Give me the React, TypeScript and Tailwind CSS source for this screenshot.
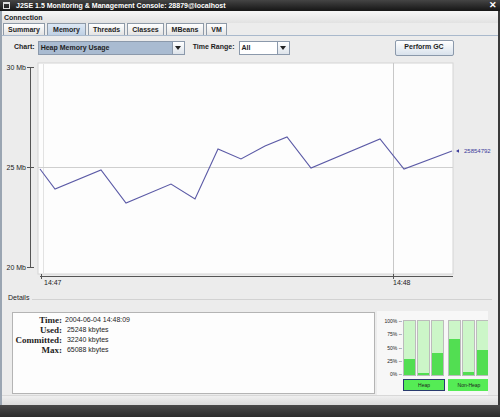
import React from "react";

const points: [number, number][] = [
  [40, 169], [55, 189], [101, 170], [126, 203], [171, 184], [195, 199], [218, 149],
  [241, 159], [265, 146], [287, 137], [311, 168], [380, 139], [404, 169], [452, 151],
];

const tabs = [
  { name: "Summary", w: "w-[42px]" },
  { name: "Memory", w: "w-[39px]" },
  { name: "Threads", w: "w-[37px]" },
  { name: "Classes", w: "w-[37px]" },
  { name: "MBeans", w: "w-[38px]" },
  { name: "VM", w: "w-[21px]" },
];

const bars = [
  [29, 4, 40],
  [67, 5, 47],
];

function Arrow() {
  return (
    <div className="w-[12px] h-full flex items-center justify-center bg-gradient-to-b from-white to-[#dde3ea] border-l border-[#8b99ab]">
      <svg width="6" height="4" viewBox="0 0 6 4">
        <path d="M0 0h6L3 4z" fill="#222" />
      </svg>
    </div>
  );
}

function Chart() {
  const d = points.map((p, i) => `${i ? "L" : "M"}${p[0]} ${p[1]}`).join(" ");
  return (
    <svg width="496" height="233" viewBox="2 58 496 233" className="block">
      <rect x="38" y="63" width="415" height="211" fill="#fdfdfd" stroke="#d4d4d4" />
      <line x1="43.5" y1="64" x2="43.5" y2="273" stroke="#e2e2e2" />
      <line x1="38" y1="167.5" x2="453" y2="167.5" stroke="#cfcfcf" />
      <line x1="393.5" y1="63" x2="393.5" y2="276" stroke="#c8c8c8" />
      <path d={d} fill="none" stroke="#5b5aa6" strokeWidth="1.1" />
      {/* y axis */}
      <line x1="30.5" y1="67" x2="30.5" y2="268" stroke="#555" />
      {[67, 167, 267].map((y) => (
        <line key={y} x1="27" y1={y + 0.5} x2="34" y2={y + 0.5} stroke="#555" />
      ))}
      {[["30 Mb", 67], ["25 Mb", 167], ["20 Mb", 267]].map(([t, y]) => (
        <text key={t as string} x="26" y={(y as number) + 2.5} textAnchor="end" fontSize="7" fill="#222" fontFamily="Liberation Sans, Arial, sans-serif">
          {t}
        </text>
      ))}
      {/* x axis */}
      <line x1="40" y1="276.5" x2="453" y2="276.5" stroke="#555" />
      <line x1="41.5" y1="274" x2="41.5" y2="279" stroke="#555" />
      <line x1="393.5" y1="274" x2="393.5" y2="279" stroke="#555" />
      <text x="44" y="285" fontSize="7" fill="#222" fontFamily="Liberation Sans, Arial, sans-serif">14:47</text>
      <text x="393" y="285" fontSize="7" fill="#222" fontFamily="Liberation Sans, Arial, sans-serif">14:48</text>
      {/* current value */}
      <path d="M456 151 l3 -1.8 v3.6z" fill="#3b3a9a" />
      <text x="464" y="153" fontSize="6" fill="#3b3a9a" fontFamily="Liberation Sans, Arial, sans-serif">25854792</text>
    </svg>
  );
}

export default function App() {
  return (
    <div className="w-[500px] h-[417px] overflow-hidden flex flex-col bg-[#ececec] font-['Liberation_Sans',Arial,sans-serif] text-[#1e1e1e]">
      {/* title bar */}
      <div className="h-[11px] shrink-0 flex items-center bg-gradient-to-b from-[#454545] to-[#161616] text-white pl-[3px] pr-[3px]">
        <div className="w-[7px] h-[7px] border border-[#ddd] border-t-2" />
        <span className="ml-[6px] text-[7px] font-bold leading-none">
          J2SE 1.5 Monitoring &amp; Management Console: 28879@localhost
        </span>
        <span className="ml-auto text-[9px] font-bold leading-none">✕</span>
      </div>

      <div className="flex-1 flex flex-col border-l-2 border-r-2 border-l-[#9aa5b2] border-r-[#3a3a3a]">
        {/* menu bar */}
        <div className="h-[12px] shrink-0 flex items-center px-[2px] bg-gradient-to-b from-[#f6f6f6] to-[#e2e2e2]">
          <span className="text-[7px] font-bold leading-none">Connection</span>
        </div>

        {/* tabs */}
        <div className="h-[13px] shrink-0 flex items-end gap-[2px] pl-[1px] bg-[#ececec] border-b border-[#a9b9cc]">
          {tabs.map((t) => (
            <div
              key={t.name}
              className={`${t.w} h-[12px] flex items-center justify-center text-[7px] font-bold leading-none border border-b-0 border-[#8e9aa8] ${
                t.name === "Memory" ? "bg-gradient-to-b from-[#dde8f4] to-[#bfd0e4]" : "bg-gradient-to-b from-white to-[#e3e3e3]"
              }`}
            >
              {t.name}
            </div>
          ))}
        </div>

        {/* panel */}
        <div className="flex-1 flex flex-col bg-[#ececec]">
          {/* controls */}
          <div className="h-[22px] shrink-0 flex items-center pl-[12px] pt-[1px]">
            <span className="text-[7px] font-bold">Chart:</span>
            <div className="ml-[3px] w-[147px] h-[14px] flex border border-[#8b99ab] bg-[#a9bbd1]">
              <span className="flex-1 text-[7px] font-bold leading-[12px] pl-[2px]">Heap Memory Usage</span>
              <Arrow />
            </div>
            <span className="ml-[8px] text-[7px] font-bold">Time Range:</span>
            <div className="ml-[4px] w-[51px] h-[14px] flex border border-[#8b99ab] bg-white">
              <span className="flex-1 text-[7px] font-bold leading-[12px] pl-[2px]">All</span>
              <Arrow />
            </div>
            <div className="ml-[105px] w-[59px] h-[16px] flex items-center justify-center border border-[#8b99ab] rounded-[2px] bg-gradient-to-b from-white to-[#d9e2ec] text-[7px] font-bold">
              Perform GC
            </div>
          </div>

          <Chart />

          {/* details */}
          <div className="h-[104px] shrink-0 flex flex-col">
            <div className="h-[14px] flex items-center pl-[6px] pr-[6px] gap-[3px]">
              <span className="text-[7px]">Details</span>
              <div className="flex-1 h-px bg-[#d2d2d2] mt-[2px]" />
            </div>
            <div className="flex pl-[10px] pt-[6px]">
              <div className="w-[363px] h-[82px] mt-[1px] bg-[#fdfdfd] border border-[#b4b4b4] pt-[2px] pl-[2px]">
                <div className="grid grid-cols-[47px_auto] gap-x-[3px] leading-[10px]">
                  {[
                    ["Time:", "2004-06-04 14:48:09"],
                    ["Used:", " 25248 kbytes"],
                    ["Committed:", " 32240 kbytes"],
                    ["Max:", " 65088 kbytes"],
                  ].map(([k, v]) => (
                    <React.Fragment key={k}>
                      <span className="text-right font-['Liberation_Serif',serif] font-bold text-[9px]">{k}</span>
                      <span className="text-[7px] whitespace-pre self-center">{v}</span>
                    </React.Fragment>
                  ))}
                </div>
              </div>
              <div className="ml-[2px] w-[111px] h-[84px] bg-[#f7f7f7] flex pt-[8px] overflow-hidden">
                <div className="w-[26px] h-[58px] shrink-0 flex flex-col justify-between items-end text-[5px] leading-none pr-[1px]">
                  {["100% --", "75% --", "50% --", "25% --", "0% --"].map((l) => (
                    <span key={l}>{l}</span>
                  ))}
                </div>
                <div className="flex gap-[3px] shrink-0">
                  {bars.map((g, gi) => (
                    <div key={gi} className="flex flex-col items-start gap-[3px]">
                      <div className="flex gap-[1px] h-[56px] mt-[1px]">
                        {g.map((v, i) => (
                          <div key={i} className="w-[13px] h-full bg-[#ccf6c8] border border-[#bcbcbc] flex flex-col justify-end">
                            <div className="bg-[#52de52]" style={{ height: `${v}%` }} />
                          </div>
                        ))}
                      </div>
                      <div
                        className={`w-[42px] h-[12px] flex items-center justify-center bg-[#55ec55] text-[5px] leading-none whitespace-nowrap ${
                          gi === 0 ? "border border-[#283a6e]" : ""
                        }`}
                      >
                        {gi === 0 ? "Heap" : "Non-Heap"}
                      </div>
                    </div>
                  ))}
                </div>
              </div>
            </div>
          </div>

          <div className="flex-1 border-t border-[#d8d8d8] bg-gradient-to-b from-[#efefef] to-[#dcdcdc]" />
        </div>
      </div>
      <div className="h-[12px] shrink-0 bg-gradient-to-b from-[#4a4a4a] to-[#2c2c2c]" />
    </div>
  );
}
